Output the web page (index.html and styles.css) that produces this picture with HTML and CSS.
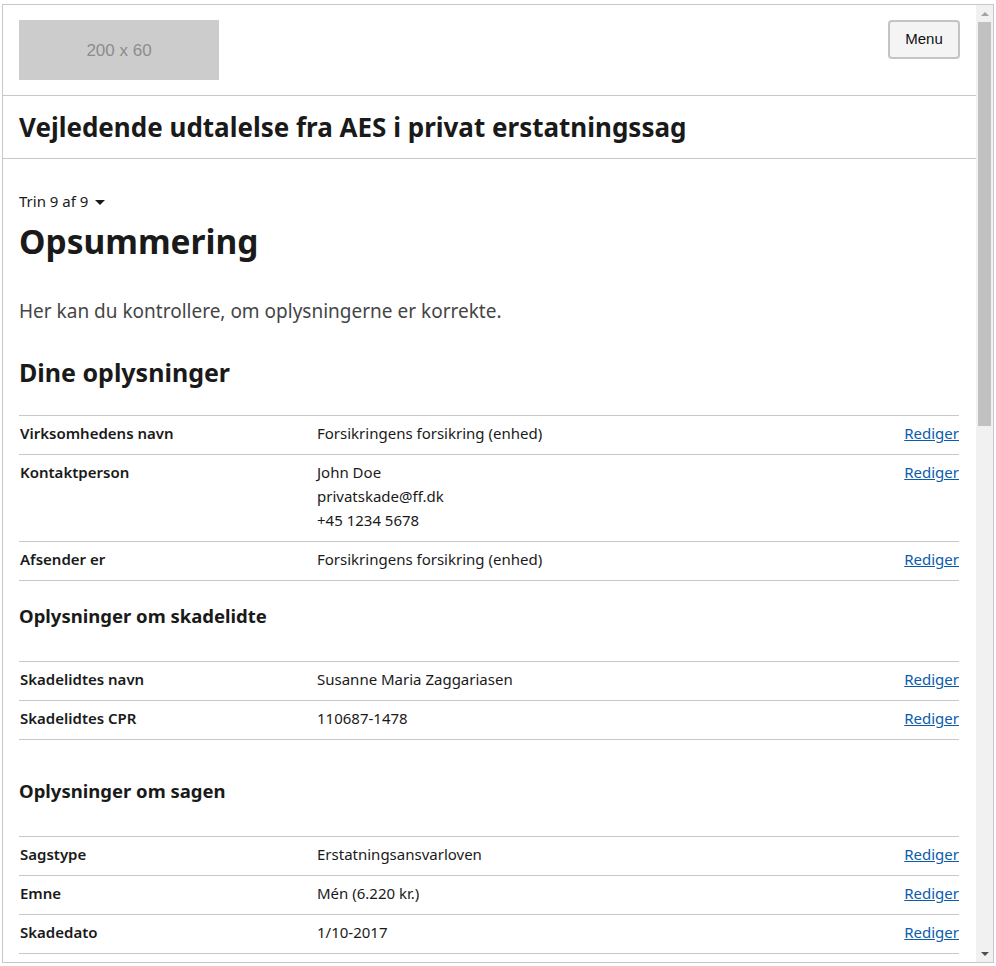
FILE: index.html
```html
<!DOCTYPE html>
<html lang="da">
<head>
<meta charset="utf-8">
<title>Vejledende udtalelse fra AES i privat erstatningssag</title>
<link rel="stylesheet" href="styles.css">
</head>
<body>
<div class="frame">
  <div class="viewport">
    <header class="site-header">
      <div class="logo">200 x 60</div>
      <button class="menu-btn" type="button">Menu</button>
    </header>
    <div class="title-bar">
      <h1 class="app-title">Vejledende udtalelse fra AES i privat erstatningssag</h1>
    </div>
    <main class="main">
      <div class="step">Trin 9 af 9 <span class="caret"></span></div>
      <h2 class="page-title">Opsummering</h2>
      <p class="lead">Her kan du kontrollere, om oplysningerne er korrekte.</p>

      <h3 class="section-title">Dine oplysninger</h3>
      <div class="summary">
        <div class="row">
          <div class="label">Virksomhedens navn</div>
          <div class="value">Forsikringens forsikring (enhed)</div>
          <div class="action"><a href="#">Rediger</a></div>
        </div>
        <div class="row">
          <div class="label">Kontaktperson</div>
          <div class="value">John Doe<br>privatskade@ff.dk<br>+45 1234 5678</div>
          <div class="action"><a href="#">Rediger</a></div>
        </div>
        <div class="row">
          <div class="label">Afsender er</div>
          <div class="value">Forsikringens forsikring (enhed)</div>
          <div class="action"><a href="#">Rediger</a></div>
        </div>
      </div>

      <h4 class="sub-title first">Oplysninger om skadelidte</h4>
      <div class="summary">
        <div class="row">
          <div class="label">Skadelidtes navn</div>
          <div class="value">Susanne Maria Zaggariasen</div>
          <div class="action"><a href="#">Rediger</a></div>
        </div>
        <div class="row">
          <div class="label">Skadelidtes CPR</div>
          <div class="value">110687-1478</div>
          <div class="action"><a href="#">Rediger</a></div>
        </div>
      </div>

      <h4 class="sub-title">Oplysninger om sagen</h4>
      <div class="summary">
        <div class="row">
          <div class="label">Sagstype</div>
          <div class="value">Erstatningsansvarloven</div>
          <div class="action"><a href="#">Rediger</a></div>
        </div>
        <div class="row">
          <div class="label">Emne</div>
          <div class="value">Mén (6.220 kr.)</div>
          <div class="action"><a href="#">Rediger</a></div>
        </div>
        <div class="row">
          <div class="label">Skadedato</div>
          <div class="value">1/10-2017</div>
          <div class="action"><a href="#">Rediger</a></div>
        </div>
      </div>
    </main>
  </div>
  <div class="scrollbar">
    <div class="arrow up"></div>
    <div class="track"><div class="thumb"></div></div>
    <div class="arrow down"></div>
  </div>
</div>
</body>
</html>
```

FILE: styles.css
```css
* { box-sizing: border-box; }
html, body { margin: 0; padding: 0; background: #fff; }
body {
  font-family: "Noto Sans", "Open Sans", sans-serif;
  color: #1a1a1a;
}
.frame {
  margin: 4px 0 0 2px;
  width: 992px;
  height: 959px;
  border: 1px solid #c8c8c8;
  display: flex;
  overflow: hidden;
}
.viewport {
  flex: 1;
  overflow: hidden;
}
.site-header {
  display: flex;
  justify-content: space-between;
  align-items: flex-start;
  padding: 15px 16px 15px 16px;
  border-bottom: 1px solid #c8c8c8;
}
.logo {
  width: 200px;
  height: 60px;
  background: #cccccc;
  color: #8c8c8c;
  font-family: "Liberation Sans", Arial, sans-serif;
  font-size: 17px;
  display: flex;
  align-items: center;
  justify-content: center;
  padding-top: 2px;
}
.menu-btn {
  width: 72px;
  height: 39px;
  border: 2px solid #c4c4c4;
  border-radius: 4px;
  background: #f4f4f4;
  font-family: "Liberation Sans", Arial, sans-serif;
  font-size: 15px;
  color: #111;
  padding: 0 0 3px;
}
.title-bar {
  padding: 15px 16px 15px;
  border-bottom: 1px solid #c8c8c8;
}
.app-title {
  margin: 0;
  font-size: 26px;
  line-height: 32px;
  font-weight: 700;
}
.main {
  padding: 32px 17px 0 16px;
}
.step {
  font-size: 15px;
  line-height: 20px;
  display: flex;
  align-items: center;
  gap: 7px;
}
.caret {
  width: 0;
  height: 0;
  border-left: 5px solid transparent;
  border-right: 5px solid transparent;
  border-top: 5px solid #1a1a1a;
  margin-top: 3px;
}
.page-title {
  margin: 8px 0 0;
  font-size: 33.5px;
  line-height: 44px;
  font-weight: 700;
}
.lead {
  margin: 34px 0 0;
  font-size: 19px;
  line-height: 28px;
  color: #454545;
}
.section-title {
  margin: 30px 0 0;
  font-size: 25px;
  line-height: 34px;
  font-weight: 700;
}
.summary {
  margin-top: 26px;
  border-bottom: 1px solid #c8c8c8;
}
.row {
  display: grid;
  grid-template-columns: 298px 1fr auto;
  border-top: 1px solid #c8c8c8;
  padding: 5px 0 9px;
  font-size: 15px;
  line-height: 24px;
}
.label {
  font-weight: 600;
  padding-left: 1px;
}
.value {
  font-size: 15px;
}
.action a {
  color: #0b5cad;
  font-size: 15px;
}
.sub-title {
  margin: 26px 0 0;
  font-size: 18.5px;
  line-height: 24px;
  font-weight: 700;
}
.sub-title + .summary { margin-top: 33px; }
.sub-title.first { margin-top: 23px; }
.sub-title:not(.first) { margin-top: 39px; }
.scrollbar {
  width: 17px;
  background: #f1f1f1;
  display: flex;
  flex-direction: column;
}
.arrow {
  height: 17px;
  display: flex;
  align-items: center;
  justify-content: center;
}
.arrow.up::before {
  content: "";
  border-left: 4px solid transparent;
  border-right: 4px solid transparent;
  border-bottom: 4px solid #a3a3a3;
}
.arrow.down::before {
  content: "";
  border-left: 4px solid transparent;
  border-right: 4px solid transparent;
  border-top: 4px solid #505050;
}
.track {
  flex: 1;
  padding: 0 2px;
}
.thumb {
  height: 404px;
  background: #c1c1c1;
}
```
